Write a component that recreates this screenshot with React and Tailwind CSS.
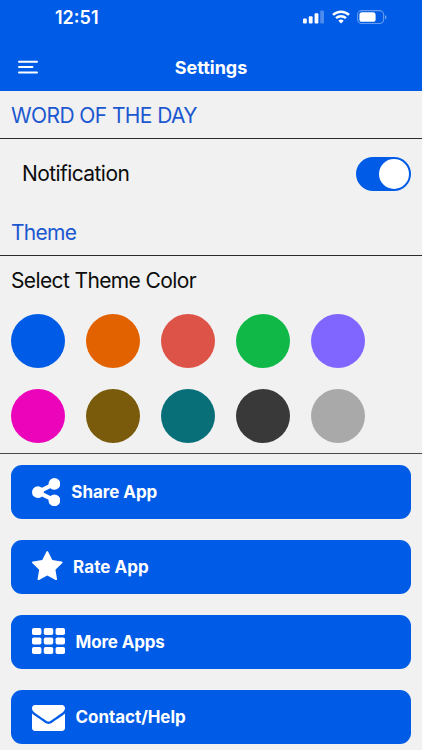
import React from 'react';

const colors = [
  'bg-[#005be6]',
  'bg-[#e26200]',
  'bg-[#de5347]',
  'bg-[#10b947]',
  'bg-[#8066ff]',
  'bg-[#eb04b9]',
  'bg-[#7a5b0b]',
  'bg-[#086e78]',
  'bg-[#393939]',
  'bg-[#a9a9a9]',
];

const actions = [
  {
    label: 'Share App',
    viewBox: '128 128 1536 1536',
    size: 'w-[28.3px] h-[28.3px]',
    text: 'ml-[11px] tracking-[-0.05px]',
    path: 'M1344 1024q133 0 226.5 93.5t93.5 226.5-93.5 226.5-226.5 93.5-226.5-93.5-93.5-226.5q0-12 2-34l-360-180q-92 86-218 86-133 0-226.5-93.5t-93.5-226.5 93.5-226.5 226.5-93.5q126 0 218 86l360-180q-2-22-2-34 0-133 93.5-226.5t226.5-93.5 226.5 93.5 93.5 226.5-93.5 226.5-226.5 93.5q-126 0-218-86l-360 180q2 22 2 34t-2 34l360 180q92-86 218-86z',
  },
  {
    label: 'Rate App',
    viewBox: '64 32 1664 1587',
    size: 'w-[30.6px] h-[29.2px] -mt-[2px]',
    text: 'ml-[10.5px] tracking-[0.05px]',
    path: 'M1728 647q0 22-26 48l-363 354 86 500q1 7 1 20 0 21-10.5 35.5t-30.5 14.5q-19 0-40-12l-449-236-449 236q-22 12-40 12-21 0-31.5-14.5t-10.5-35.5q0-6 2-20l86-500-364-354q-25-27-25-48 0-37 56-46l502-73 225-455q19-41 49-41t49 41l225 455 502 73q56 9 56 46z',
  },
  {
    label: 'More Apps',
    viewBox: '0 128 1792 1408',
    size: 'w-[33px] h-[26px] -mt-[1.5px]',
    text: 'ml-[10.5px] tracking-[-0.15px]',
    grid: true,
  },
  {
    label: 'Contact/Help',
    viewBox: '0 256 1792 1408',
    size: 'w-[33px] h-[26px] mt-[3px]',
    text: 'ml-[10.5px] tracking-[-0.05px]',
    path: 'M1792 710v794q0 66-47 113t-113 47h-1472q-66 0-113-47t-47-113v-794q44 49 101 87 362 246 497 345 57 42 92.5 65.5t94.5 48 110 24.5h2q51 0 110-24.5t94.5-48 92.5-65.5q170-123 498-345 57-39 100-87zm0-294q0 79-49 151t-122 123q-376 261-468 325-10 7-42.5 31t-54 38.5-52 32.5-57.5 27-50 9h-2q-23 0-50-9t-57.5-27-52-32.5-54-38.5-42.5-31q-91-64-262-182.5t-205-142.5q-62-42-117-115.5t-55-136.5q0-78 41.5-130t118.5-52h1472q65 0 112.5 47t47.5 113z',
  },
];

const StatusIcons = () => (
  <div className="flex items-center text-white">
    {/* Signal */}
    <svg className="w-[21px] h-[14px]" viewBox="0 0 21 14" fill="currentColor">
      <rect x="0" y="8.5" width="3.8" height="5" rx="1.1" />
      <rect x="5.8" y="6.2" width="3.8" height="7.3" rx="1.1" />
      <rect x="11.6" y="3.2" width="3.8" height="10.3" rx="1.1" />
      <rect x="17.2" y="0.6" width="3.8" height="12.9" rx="1.1" opacity="0.3" />
    </svg>
    {/* Wifi */}
    <svg className="w-[18px] h-[14px] ml-[8px]" viewBox="0 0 18 14" fill="none" stroke="currentColor" strokeWidth="2.5">
      <path d="M1 4.9a11.6 11.6 0 0 1 16 0" />
      <path d="M4 8.2a7.3 7.3 0 0 1 10 0" />
      <path d="M6.3 10.7a4 4 0 0 1 5.4 0L9 13.4z" fill="currentColor" stroke="none" />
    </svg>
    {/* Batterie */}
    <svg className="w-[30px] h-[14px] ml-[7px]" viewBox="0 0 30 14" fill="none">
      <rect x="0.6" y="0.6" width="26" height="12.9" rx="4" stroke="currentColor" strokeOpacity="0.4" strokeWidth="1.1" />
      <rect x="2.4" y="2.3" width="16.2" height="9.5" rx="2.6" fill="currentColor" />
      <path d="M28 5v4.3c.9-.4 1.5-1.2 1.5-2.1S28.9 5.4 28 5z" fill="currentColor" fillOpacity="0.45" />
    </svg>
  </div>
);

const ActionIcon = ({ action }) => (
  <svg className={`shrink-0 ${action.size}`} viewBox={action.viewBox} fill="currentColor">
    {action.grid
      ? [128, 640, 1152].map((y) =>
          [0, 640, 1280].map((x) => <rect key={`${x}-${y}`} x={x} y={y} width="512" height="384" rx="96" />)
        )
      : <path d={action.path} />}
  </svg>
);

const App = () => {
  return (
    <div className="w-full h-[750px] overflow-hidden bg-[#f1f1f1] text-[#0c0c0c] font-['Inter',sans-serif]">
      <header className="h-[90.5px] bg-[#005be6] text-white">
        <div className="h-[34px] flex items-center justify-between pl-[55px] pr-[35px]">
          <span className="pt-[1px] text-[18px] font-semibold">12:51</span>
          <StatusIcons />
        </div>
        <div className="h-[56px] pt-[10px] grid grid-cols-[60px_1fr_60px] items-center">
          <svg className="w-[20px] h-[14px] ml-[18px]" viewBox="0 0 20 14" stroke="currentColor" strokeWidth="2" strokeLinecap="round">
            <path d="M1 1.7h18M1 7.1h13.5M1 12.5h18" />
          </svg>
          <h1 className="text-center text-[18px] font-bold">Settings</h1>
        </div>
      </header>

      {/* Mot du jour */}
      <h2 className="h-[48.5px] border-b border-[#2c2c2c] flex items-center pl-[11px] pt-[2px] text-[21px] text-[#1b58d0]">
        <span className="tracking-[-0.6px]">WORD OF THE DAY</span>
      </h2>
      <div className="h-[69px] flex items-center justify-between pl-[22px] pr-[11px]">
        <span className="pt-[1px] text-[21px] tracking-[-0.58px]">Notification</span>
        <button className="w-[55px] h-[34px] rounded-full bg-[#005be6] flex items-center justify-end pr-[2px]">
          <span className="w-[30px] h-[30px] rounded-full bg-white"></span>
        </button>
      </div>

      {/* Choix du thème */}
      <h2 className="h-[48px] border-b border-[#2c2c2c] flex items-center pl-[11px] pt-[2px] text-[21px] text-[#1b58d0]">
        <span className="tracking-[-0.7px]">Theme</span>
      </h2>
      <div className="h-[198px] border-b border-[#4a4a4a]">
        <h3 className="h-[49px] flex items-center pl-[11px] text-[21px] tracking-[-0.62px]">Select Theme Color</h3>
        <div className="grid grid-cols-[repeat(5,54px)] gap-[21px] pl-[11px] pt-[8.5px]">
          {colors.map((color) => (
            <button key={color} className={`w-[54px] h-[54px] rounded-full ${color}`}></button>
          ))}
        </div>
      </div>

      {/* Actions */}
      <div className="px-[11px] pt-[11px] space-y-[21.5px]">
        {actions.map((action) => (
          <button key={action.label} className="w-full h-[53.5px] rounded-[11px] bg-[#005be6] text-white flex items-center pl-[21px]">
            <ActionIcon action={action} />
            <span className={`pt-[2px] text-[17px] font-bold ${action.text}`}>{action.label}</span>
          </button>
        ))}
      </div>
    </div>
  );
};

export default App;
